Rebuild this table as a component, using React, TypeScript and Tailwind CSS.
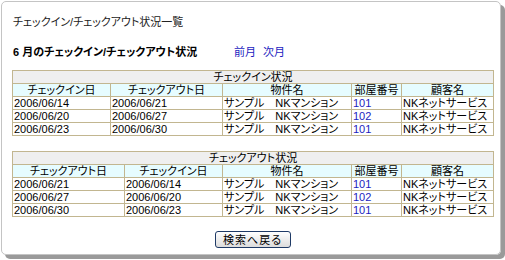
import React from 'react';

const CHECKIN_ROWS = [
  { a: '2006/06/14', b: '2006/06/21', name: 'サンプル　NKマンション', room: '101', client: 'NKネットサービス' },
  { a: '2006/06/20', b: '2006/06/27', name: 'サンプル　NKマンション', room: '102', client: 'NKネットサービス' },
  { a: '2006/06/23', b: '2006/06/30', name: 'サンプル　NKマンション', room: '101', client: 'NKネットサービス' },
];

const CHECKOUT_ROWS = [
  { a: '2006/06/21', b: '2006/06/14', name: 'サンプル　NKマンション', room: '101', client: 'NKネットサービス' },
  { a: '2006/06/27', b: '2006/06/20', name: 'サンプル　NKマンション', room: '102', client: 'NKネットサービス' },
  { a: '2006/06/30', b: '2006/06/23', name: 'サンプル　NKマンション', room: '101', client: 'NKネットサービス' },
];

type Row = (typeof CHECKIN_ROWS)[number];

function StatusTable({
  caption,
  headA,
  headB,
  wA,
  wB,
  rows,
}: {
  caption: string;
  headA: string;
  headB: string;
  wA: string;
  wB: string;
  rows: Row[];
}) {
  const cell = 'border border-[#c2b690] px-px h-[13px] leading-[12px] whitespace-nowrap overflow-hidden';
  return (
    <table className="w-[481px] table-fixed border-collapse border border-[#9e9070] text-[11px]">
      <colgroup>
        <col className={wA} />
        <col className={wB} />
        <col className="w-[129px]" />
        <col className="w-[50px]" />
        <col className="w-[92px]" />
      </colgroup>
      <tbody>
        <tr className="bg-[#efefef]">
          <td colSpan={5} className={`${cell} text-center`}>
            {caption}
          </td>
        </tr>
        <tr className="bg-[#e6fcff]">
          <td className={`${cell} text-center`}>{headA}</td>
          <td className={`${cell} text-center`}>{headB}</td>
          <td className={`${cell} text-center`}>物件名</td>
          <td className={`${cell} text-center`}>部屋番号</td>
          <td className={`${cell} text-center`}>顧客名</td>
        </tr>
        {rows.map((r, i) => (
          <tr key={i} className="bg-white">
            <td className={cell}>{r.a}</td>
            <td className={cell}>{r.b}</td>
            <td className={cell}>{r.name}</td>
            <td className={`${cell} text-[#1c1cc0]`}>{r.room}</td>
            <td className={cell}>{r.client}</td>
          </tr>
        ))}
      </tbody>
    </table>
  );
}

export default function App() {
  return (
    <div className="w-[505px] h-[260px] bg-white text-black font-['Liberation_Sans','Noto_Sans_CJK_JP',sans-serif] [font-feature-settings:'palt']">
      <div className="ml-px mt-px w-[500px] h-[254px] border border-[#c4c4c4] rounded-[5px] shadow-[4px_4px_0_#9a9a9a] pl-[10px] flex flex-col">
        <h1 className="mt-[13px] ml-px text-[11px] leading-[14px] font-normal text-[#222]">
          チェックイン/チェックアウト状況一覧
        </h1>

        <div className="mt-[16px] flex items-center text-[11px] leading-[14px]">
          <span className="w-[221px] ml-px font-bold">6 月のチェックイン/チェックアウト状況</span>
          <a className="text-[#1c1cc0]">前月</a>
          <a className="ml-[7px] text-[#1c1cc0]">次月</a>
        </div>

        <div className="mt-[11px]">
          <StatusTable
            caption="チェックイン状況"
            headA="チェックイン日"
            headB="チェックアウト日"
            wA="w-[98px]"
            wB="w-[112px]"
            rows={CHECKIN_ROWS}
          />
        </div>

        <div className="mt-[15px]">
          <StatusTable
            caption="チェックアウト状況"
            headA="チェックアウト日"
            headB="チェックイン日"
            wA="w-[112px]"
            wB="w-[98px]"
            rows={CHECKOUT_ROWS}
          />
        </div>

        <div className="mt-[14px] w-[481px] flex justify-center">
          <button className="w-[76px] h-[17px] border border-[#1f3a66] rounded-[3px] bg-linear-to-b from-white to-[#dcdcdc] text-[11px] leading-[14px] tracking-[1px]">
            検索へ戻る
          </button>
        </div>
      </div>
    </div>
  );
}
